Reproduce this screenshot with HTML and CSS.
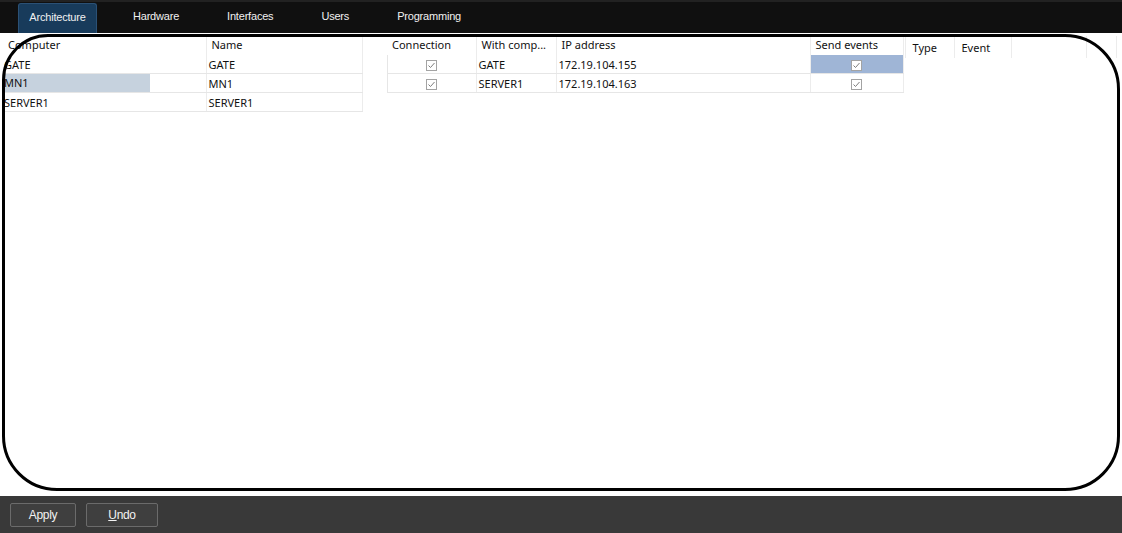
FILE: index.html
```html
<!DOCTYPE html>
<html>
<head>
    <meta charset="UTF-8">
    <title>Architecture</title>
    <link rel="stylesheet" href="styles.css">
</head>
<body>
    <div class="topbar">
        <div class="tab active">Architecture</div>
        <div class="tab">Hardware</div>
        <div class="tab">Interfaces</div>
        <div class="tab">Users</div>
        <div class="tab">Programming</div>
    </div>

    <div class="workspace">
        <table class="grid computers">
            <colgroup>
                <col class="col-computer">
                <col class="col-name">
            </colgroup>
            <tr><th>Computer</th><th>Name</th></tr>
            <tr><td>GATE</td><td>GATE</td></tr>
            <tr><td><span class="picked">MN1</span></td><td>MN1</td></tr>
            <tr><td>SERVER1</td><td>SERVER1</td></tr>
        </table>

        <table class="grid links">
            <colgroup>
                <col class="col-conn">
                <col class="col-with">
                <col class="col-ip">
                <col class="col-send">
            </colgroup>
            <tr><th>Connection</th><th>With comp...</th><th>IP address</th><th>Send events</th></tr>
            <tr>
                <td class="check"><svg class="box" viewBox="0 0 11 11"><rect x="0.5" y="0.5" width="10" height="10"/><polyline points="2.5,5.5 4.5,7.5 8.5,3"/></svg></td>
                <td>GATE</td>
                <td>172.19.104.155</td>
                <td class="check selected"><svg class="box" viewBox="0 0 11 11"><rect x="0.5" y="0.5" width="10" height="10"/><polyline points="2.5,5.5 4.5,7.5 8.5,3"/></svg></td>
            </tr>
            <tr>
                <td class="check"><svg class="box" viewBox="0 0 11 11"><rect x="0.5" y="0.5" width="10" height="10"/><polyline points="2.5,5.5 4.5,7.5 8.5,3"/></svg></td>
                <td>SERVER1</td>
                <td>172.19.104.163</td>
                <td class="check"><svg class="box" viewBox="0 0 11 11"><rect x="0.5" y="0.5" width="10" height="10"/><polyline points="2.5,5.5 4.5,7.5 8.5,3"/></svg></td>
            </tr>
        </table>

        <table class="grid events">
            <colgroup>
                <col class="col-type">
                <col class="col-event">
                <col class="col-extra">
                <col class="col-extra2">
            </colgroup>
            <tr><th class="low">Type</th><th class="low">Event</th><th></th><th></th></tr>
        </table>

        <div class="annotation"></div>
    </div>

    <div class="footer">
        <button class="btn apply">Apply</button>
        <button class="btn undo"><u>U</u>ndo</button>
    </div>
</body>
</html>
```

FILE: styles.css
```css
body {
    margin: 0;
    width: 1122px;
    height: 533px;
    overflow: hidden;
    background-color: white;
    font-family: "Noto Sans", "Open Sans", sans-serif;
    font-size: 11px;
    color: #111;
}
.topbar {
    height: 31px;
    border-top: 2px solid #222;
    background-color: #101010;
    display: flex;
    align-items: flex-end;
    gap: 24px;
    padding-left: 18px;
}
.tab {
    height: 30px;
    line-height: 27px;
    padding: 0 12px;
    font-family: "Liberation Sans", Arial, sans-serif;
    font-size: 11px;
    letter-spacing: -0.2px;
    color: #f0f0f0;
    box-sizing: border-box;
}
.tab.active {
    width: 79px;
    text-align: center;
    padding: 0;
    background-color: #183b5b;
    border: 1px solid #2b5176;
    border-bottom: none;
    border-radius: 3px 3px 0 0;
}
.workspace {
    position: relative;
    height: 460px;
    padding: 3px 0 0 3px;
    display: flex;
    align-items: flex-start;
    background-color: white;
}
.grid {
    border-collapse: collapse;
    table-layout: fixed;
}
.grid th {
    height: 17px;
    padding: 0 0 2px 5px;
    text-align: left;
    font-weight: normal;
    white-space: nowrap;
    overflow: hidden;
    border-right: 1px solid #ececec;
}
.grid td {
    height: 18px;
    padding: 0 0 0 2px;
    white-space: nowrap;
    border-bottom: 1px solid #e6e6e6;
    border-right: 1px solid #ececec;
}
.computers {
    width: 359px;
}
.computers td:first-child {
    padding-left: 1px;
}
.col-computer { width: 203px; }
.col-name { width: 156px; }
.picked {
    display: inline-block;
    width: 146px;
    height: 18px;
    line-height: 18px;
    margin-left: -1px;
    padding-left: 1px;
    background-color: #c6d2de;
}
.links {
    width: 516px;
    margin-left: 24px;
}
.links td:first-child {
    border-left: 1px solid #e6e6e6;
}
.col-conn { width: 89px; }
.col-with { width: 80px; }
.col-ip { width: 254px; }
.col-send { width: 93px; }
.check {
    text-align: center;
}
.grid td.check {
    padding: 0;
}
.box {
    display: inline-block;
    width: 11px;
    height: 11px;
    vertical-align: middle;
}
.box rect {
    fill: white;
    stroke: #a3a3a3;
    stroke-width: 1;
}
.box polyline {
    fill: none;
    stroke: #7d7d7d;
    stroke-width: 1;
}
.selected {
    background-color: #9fb5d6;
}
.events {
    width: 211px;
    margin-left: 1px;
}
.events th {
    border-left: 1px solid #ececec;
}
.events th.low {
    padding-top: 3px;
    padding-left: 7px;
}
.col-type { width: 49px; }
.col-event { width: 57px; }
.col-extra { width: 75px; }
.col-extra2 { width: 30px; }
.annotation {
    position: absolute;
    left: 2px;
    top: 1px;
    width: 1112px;
    height: 451px;
    border: 3px solid #000;
    border-radius: 46px 55px 55px 55px;
    pointer-events: none;
}
.footer {
    height: 37px;
    background-color: #393939;
    display: flex;
    align-items: center;
    gap: 10px;
    padding-left: 10px;
}
.btn {
    height: 24px;
    background-color: #3f3f3f;
    border: 1px solid #6b6b6b;
    border-radius: 2px;
    color: #f2f2f2;
    font-family: "Liberation Sans", Arial, sans-serif;
    font-size: 12px;
    letter-spacing: -0.3px;
    margin-top: 1px;
}
.apply { width: 66px; }
.undo { width: 72px; }
```
